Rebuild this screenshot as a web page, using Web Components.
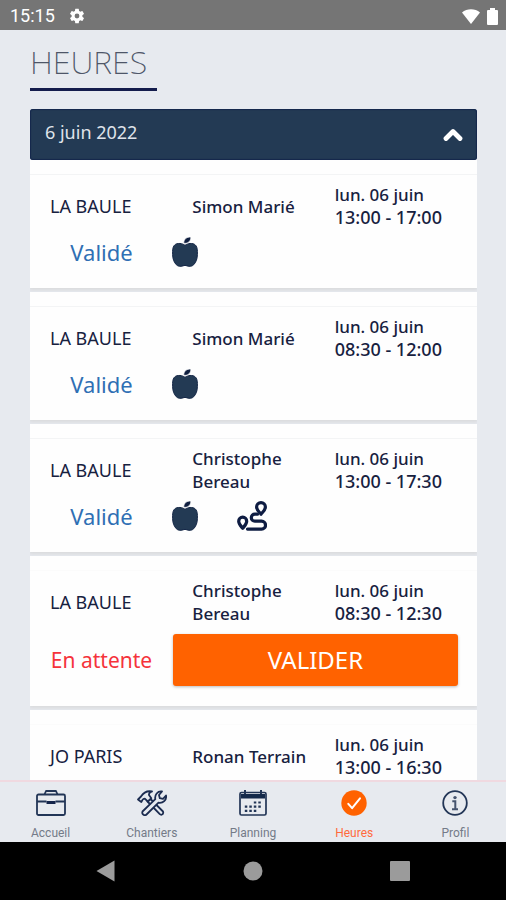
<!DOCTYPE html>
<html lang="fr">
<head>
<meta charset="utf-8">
<meta name="viewport" content="width=device-width, initial-scale=1">
<title>Heures</title>
<style>
  body { margin: 0; font-family: "Noto Sans", "Open Sans", sans-serif; }
</style>
</head>
<body>
<hours-app></hours-app>

<script>
const define = (name, markup, setup) => {
  const template = document.createElement('template');
  template.innerHTML = markup;
  customElements.define(name, class extends HTMLElement {
    constructor() {
      super();
      this.attachShadow({ mode: 'open' }).append(template.content.cloneNode(true));
    }
    connectedCallback() {
      if (setup) setup(this, this.shadowRoot);
    }
  });
};

const icons = {
  apple: ['0 0 26 30', '<path fill="#233a54" stroke="#152747" d="M13 8.300C10.500 6.600 8.500 6.300 6.300 6.500 2.300 6.800.6 9.800.6 14.500v3c0 4.300 1.500 8 3.700 10.200 1.400 1.400 2.900 1.700 4.700 1.600 1.500-.1 2.600-.9 4-.9s2.500.8 4 .9c1.800.1 3.300-.2 4.700-1.600 2.200-2.200 3.700-5.900 3.700-10.200v-3c0-4.700-1.700-7.700-5.700-8C17.500 6.300 15.500 6.600 13 8.300z"/><path fill="#101f40" stroke="#fefefe" stroke-width=".7" d="M11.700 6.300C11.700 2.300 14.600-.2 18.800 0c.2 4.200-2.800 6.800-7.100 6.300z"/>'],
  route: ['0 0 30 30', '<g fill="none" stroke="#0e1c42" stroke-width="3.200" stroke-linecap="round" stroke-linejoin="round"><path d="M24 13.200c-1.900-2.300-4.400-4.300-4.400-7.200a4.400 4.400 0 0 1 8.800 0c0 2.900-2.500 4.900-4.400 7.200z"/><path d="M5.700 27.300c-2-2.400-4-4.300-4-7.100a4 4 0 0 1 8 0c0 2.800-2 4.700-4 7.100z"/><path d="M20.500 13.200h-2.700a3.500 3.500 0 0 0 0 7h6.800a3.900 3.900 0 0 1 0 7.900H10.500"/></g>'],
  gear: ['0 0 24 24', '<path fill="#fff" d="M19.140 12.940a7 7 0 0 0 0-1.880l2.030-1.580a.5.5 0 0 0 .12-.61l-1.920-3.320a.5.5 0 0 0-.59-.22l-2.390.96a7 7 0 0 0-1.620-.94L14.400 2.810a.5.5 0 0 0-.48-.41h-3.840a.5.5 0 0 0-.47.410l-.36 2.540a7 7 0 0 0-1.620.94l-2.390-.96a.5.5 0 0 0-.59.22L2.740 8.870a.5.5 0 0 0 .12.610l2.030 1.580a7 7 0 0 0 0 1.880l-2.030 1.580a.5.5 0 0 0-.12.610l1.920 3.320c.12.220.370.290.590.220l2.390-.96c.5.380 1.030.7 1.620.94l.36 2.540c.05.240.240.410.480.410h3.840c.24 0 .440-.17.470-.410l.36-2.540a7 7 0 0 0 1.620-.94l2.390.96c.220.080.470 0 .590-.220l1.920-3.320a.5.5 0 0 0-.12-.610zM12 15.200a3.200 3.200 0 1 1 0-6.400 3.200 3.200 0 0 1 0 6.400z"/>'],
  wifi: ['0 0 18 15', '<path fill="#fff" d="M0 3.500C5-.9 13-.9 18 3.500L9 15z"/>'],
  battery: ['0 0 11 17', '<path fill="#fff" d="M3 0h5v2h2q1 0 1 1v13q0 1-1 1H1q-1 0-1-1V3q0-1 1-1h2z"/>'],
  chevron: ['0 0 20 14', '<path fill="none" stroke="#fff" stroke-width="4.800" stroke-linecap="round" stroke-linejoin="round" d="M3 10.500 10 3.500l7 7"/>'],
  briefcase: ['0 0 30 26', '<g fill="none" stroke="#223556" stroke-width="1.800" stroke-linejoin="round"><rect x="1" y="4.500" width="28" height="20.500" rx="1.500"/><path d="M8.500 4.500 10 1h10l1.500 3.500M1 11.500h9.500M19.500 11.500H29"/></g><path fill="#14244a" d="M10.500 11h9v3h-9z"/>'],
  tools: ['0 0 30 26', '<g fill="#e7eaef" stroke="#1c2c50" stroke-width="1.800" stroke-linejoin="round"><path d="M10.500 11.500 13.500 9l12.500 12.500q.8 2.500-1.300 3.200-1 .3-1.900-.5z"/><path d="M5.500 21.500 18.300 9.200C17.500 5 20.500.8 25 1.500l-3 3.500.8 3.200 3.200.6 3-3.300c.8 4.500-3 8-7.500 7.200L9 25q-1.800.5-3-.7t-.5-2.800z"/><path d="M1 9.500 4 6.500C6.500 2.500 10.500.6 15 1.500c-2 .8-3.300 2-3 3.500l2.300 3.200-3.500 3.300-3-2.800q-1.600 0-2.300 1.200L4.300 12z"/></g>'],
  calendar: ['0 0 28 26', '<rect x="1" y="2.500" width="26" height="22.500" rx="1.500" fill="none" stroke="#223556" stroke-width="1.700"/><path fill="#14294a" d="M2 4h24v4.500H2z"/><path stroke="#223556" stroke-width="2" d="M6 0v4M22 0v4"/><path stroke="#223556" stroke-width="2.200" stroke-dasharray="2.500 2" d="M14.800 12.500h7M5.800 16.700h16M5.800 20.900h11.500"/>'],
  check: ['0 0 26 26', '<circle cx="13" cy="13" r="12.700" fill="#ff6200"/><path fill="none" stroke="#fff" stroke-width="2" stroke-linecap="round" stroke-linejoin="round" d="m7.300 13.800 3.800 4.400L19 8.300"/>'],
  info: ['0 0 26 26', '<circle cx="13" cy="13" r="11.800" fill="none" stroke="#223556" stroke-width="1.800"/><circle cx="13" cy="7.600" r="1.700" fill="#46546e"/><path fill="none" stroke="#46546e" stroke-width="2" d="M10.300 11.300h3V19M10 19.200h6"/>'],
  back: ['0 0 20 22', '<path fill="#9b9b9b" d="M18.500.500v21L.5 11z"/>'],
  home: ['0 0 20 20', '<circle cx="10" cy="10" r="9.500" fill="#9b9b9b"/>'],
  recent: ['0 0 20 20', '<rect width="20" height="20" rx="1" fill="#9b9b9b"/>']
};

define('app-icon', `
  <style>:host { display: block; flex: none; } svg { display: block; }</style>
  <svg aria-hidden="true"></svg>`,
  (el, root) => {
    const [box, art] = icons[el.getAttribute('name')];
    const [, , w, h] = box.split(' ');
    const size = Number(el.getAttribute('width') || w);
    const svg = root.querySelector('svg');
    svg.setAttribute('viewBox', box);
    svg.setAttribute('width', size);
    svg.setAttribute('height', Math.round(size * h / w));
    svg.innerHTML = art;
  });

define('status-bar', `
  <style>
    :host { display: flex; align-items: center; height: 30px; padding: 2px 8px 0 10px; gap: 13px; box-sizing: border-box;
      background: #757575; color: #fff; font: 400 18px/28px Roboto, sans-serif; flex: none; }
    .right { display: flex; align-items: center; gap: 7px; margin-left: auto; }
  </style>
  <span>15:15</span><app-icon name="gear" width="18"></app-icon>
  <span class="right"><app-icon name="wifi"></app-icon><app-icon name="battery"></app-icon></span>`);

define('page-title', `
  <style>
    :host { display: block; }
    h1 { display: inline-block; margin: 0; padding: 12px 10px 6px 0; border-bottom: 3px solid #141c4c;
      font-size: 32px; line-height: 40px; font-weight: 200; color: #4e5668; }
  </style>
  <h1><slot></slot></h1>`);

define('day-group', `
  <style>
    :host { display: block; margin-top: 18px; }
    button { display: flex; align-items: center; justify-content: space-between; width: 100%; height: 51px;
      margin: 0; padding: 0 14px 5px 15px; border: 0; border-radius: 3px; background: #233a54;
      box-shadow: inset 0 0 1px 1px #14274c; color: #dfe3ea; font: 400 18px/24px "Noto Sans", sans-serif; }
    app-icon { padding-top: 6px; }
    .list { display: flex; flex-direction: column; gap: 4px; }
  </style>
  <button type="button" aria-expanded="true"><span></span><app-icon name="chevron"></app-icon></button>
  <div class="list"><slot></slot></div>`,
  (el, root) => { root.querySelector('span').textContent = el.getAttribute('day'); });

define('hour-card', `
  <style>
    :host { display: block; background: #fefefe; box-shadow: 0 1px 4px 1px #d8d9db; clip-path: inset(0 0 -4px 0);
      color: #17213f; font-size: 17px; line-height: 23px; font-weight: 500; }
    .sep { height: 14px; border-bottom: 1px solid #f3f4f5; }
    :host([plain]) .sep { border-color: #fbfbfb; }
    .info { display: grid; grid-template-columns: repeat(3, 1fr); align-items: center; min-height: 46px;
      padding: 8px 0 0 20px; }
    .info > * { padding-right: 20px; }
    .site { font-weight: 400; font-size: 18px; }
    .info > .time { padding-right: 0; }
    .hours { font-size: 18px; }
    .time > * { display: block; }
    .state { display: flex; align-items: center; min-height: 32px; padding: 7px 19px 20px 20px; }
    .label { width: 103px; margin-right: 19px; text-align: center; white-space: nowrap; font-size: 22px; line-height: 32px;
      font-weight: 400; color: #2f6fb4; }
    .extras { display: flex; align-items: center; gap: 39px; flex: 1; }
    :host([status="En attente"]) .state { padding: 9px 19px 20px 20px; }
    :host([status="En attente"]) .label { color: #f5333b; font-size: 21px; margin-right: 20px; }
    button { flex: 1; height: 52px; border: 0; border-radius: 3px; background: #ff6200; color: #fff;
      box-shadow: 0 1px 3px #bbb; font: 400 24px/30px "Noto Sans", sans-serif; }
  </style>
  <div class="sep"></div>
  <div class="info">
    <span class="site"></span><span><slot name="who"></slot></span>
    <span class="time"><span><slot name="date"></slot></span><span class="hours"><slot name="hours"></slot></span></span>
  </div>
  <div class="state"><span class="label"></span><span class="extras"></span></div>`,
  (el, root) => {
    const status = el.getAttribute('status') || '';
    root.querySelector('.site').textContent = el.getAttribute('site');
    root.querySelector('.label').textContent = status;
    root.querySelector('.extras').innerHTML = status === 'En attente'
      ? '<button type="button">VALIDER</button>'
      : (el.getAttribute('extras') || '').split(' ').filter(Boolean)
          .map(name => `<app-icon name="${name}"></app-icon>`).join('');
  });

define('tab-link', `
  <style>
    :host { display: block; flex: 1; }
    a { display: flex; flex-direction: column; align-items: center; text-decoration: none; color: #747b88;
      padding-top: 8px; font: 400 12px/18px Roboto, sans-serif; }
    .icon { display: flex; align-items: center; height: 26px; margin-bottom: 8px; }
    :host([active]) a { color: #ff6a3c; }
  </style>
  <a href="#"><span class="icon"></span><slot></slot></a>`,
  (el, root) => {
    root.querySelector('.icon').innerHTML = `<app-icon name="${el.getAttribute('icon')}"></app-icon>`;
    if (el.hasAttribute('active')) root.querySelector('a').setAttribute('aria-current', 'page');
  });

define('tab-bar', `
  <style>
    :host { display: block; flex: none; }
    nav { display: flex; height: 60px; border-top: 2px solid #f0d9e0; background: #e7eaef; }
  </style>
  <nav><slot></slot></nav>`);

define('system-bar', `
  <style>
    :host { display: flex; justify-content: center; align-items: center; height: 58px; flex: none; background: #000; }
    button { display: grid; place-items: center; flex: 0 0 29%; height: 100%; padding: 0; border: 0; background: none; }
  </style>
  <button type="button" aria-label="Retour"><app-icon name="back"></app-icon></button>
  <button type="button" aria-label="Accueil du téléphone"><app-icon name="home"></app-icon></button>
  <button type="button" aria-label="Applications récentes"><app-icon name="recent"></app-icon></button>`);

define('hours-app', `
  <style>
    :host { display: flex; flex-direction: column; height: 100vh; background: #e7eaef; }
    main { flex: 1; min-height: 0; overflow: hidden; padding: 0 29px 0 30px; }
  </style>
  <status-bar></status-bar>
  <main>
    <page-title>HEURES</page-title>
    <day-group day="6 juin 2022">
      <hour-card site="LA BAULE" status="Validé" extras="apple"><span slot="who">Simon Marié</span><span slot="date">lun. 06 juin</span><span slot="hours">13:00 - 17:00</span></hour-card>
      <hour-card site="LA BAULE" status="Validé" extras="apple"><span slot="who">Simon Marié</span><span slot="date">lun. 06 juin</span><span slot="hours">08:30 - 12:00</span></hour-card>
      <hour-card site="LA BAULE" status="Validé" extras="apple route"><span slot="who">Christophe Bereau</span><span slot="date">lun. 06 juin</span><span slot="hours">13:00 - 17:30</span></hour-card>
      <hour-card site="LA BAULE" status="En attente" plain><span slot="who">Christophe Bereau</span><span slot="date">lun. 06 juin</span><span slot="hours">08:30 - 12:30</span></hour-card>
      <hour-card site="JO PARIS" plain><span slot="who">Ronan Terrain</span><span slot="date">lun. 06 juin</span><span slot="hours">13:00 - 16:30</span></hour-card>
    </day-group>
  </main>
  <tab-bar>
    <tab-link icon="briefcase">Accueil</tab-link>
    <tab-link icon="tools">Chantiers</tab-link>
    <tab-link icon="calendar">Planning</tab-link>
    <tab-link icon="check" active>Heures</tab-link>
    <tab-link icon="info">Profil</tab-link>
  </tab-bar>
  <system-bar></system-bar>`);
</script>
</body>
</html>
